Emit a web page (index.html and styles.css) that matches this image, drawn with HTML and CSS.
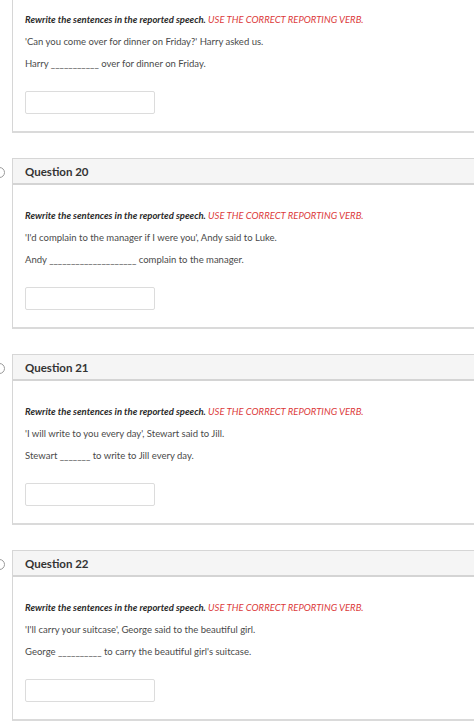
FILE: index.html
```html
<!DOCTYPE html>
<html lang="en">
<head>
<meta charset="utf-8">
<title>Quiz</title>
<link rel="stylesheet" href="styles.css">
</head>
<body>
<div class="page">
  <section class="card card-cut">
    <div class="body">
      <p class="instr"><span class="b">Rewrite the sentences in the reported speech.</span> <span class="red">USE THE CORRECT REPORTING VERB.</span></p>
      <p class="line">'Can you come over for dinner on Friday?' Harry asked us.</p>
      <p class="line">Harry ___________ over for dinner on Friday.</p>
      <div class="answer"></div>
    </div>
  </section>

  <section class="card">
    <div class="head"><span class="flag"></span>Question 20</div>
    <div class="body">
      <p class="instr"><span class="b">Rewrite the sentences in the reported speech.</span> <span class="red">USE THE CORRECT REPORTING VERB.</span></p>
      <p class="line">'I'd complain to the manager if I were you', Andy said to Luke.</p>
      <p class="line">Andy ____________________ complain to the manager.</p>
      <div class="answer"></div>
    </div>
  </section>

  <section class="card">
    <div class="head"><span class="flag"></span>Question 21</div>
    <div class="body">
      <p class="instr"><span class="b">Rewrite the sentences in the reported speech.</span> <span class="red">USE THE CORRECT REPORTING VERB.</span></p>
      <p class="line">'I will write to you every day', Stewart said to Jill.</p>
      <p class="line">Stewart _______ to write to Jill every day.</p>
      <div class="answer"></div>
    </div>
  </section>

  <section class="card">
    <div class="head"><span class="flag"></span>Question 22</div>
    <div class="body">
      <p class="instr"><span class="b">Rewrite the sentences in the reported speech.</span> <span class="red">USE THE CORRECT REPORTING VERB.</span></p>
      <p class="line">'I'll carry your suitcase', George said to the beautiful girl.</p>
      <p class="line">George __________ to carry the beautiful girl's suitcase.</p>
      <div class="answer"></div>
    </div>
  </section>
</div>
</body>
</html>
```

FILE: styles.css
```css
html, body {
  margin: 0;
  padding: 0;
  background: #fff;
  overflow: hidden;
}
body {
  font-family: Lato, "Open Sans", sans-serif;
  color: #444;
}
.page {
  padding-left: 12px;
  margin-right: -30px;
  display: flex;
  flex-direction: column;
  gap: 25px;
}
.card {
  border: 1px solid #d6d6d6;
  border-bottom: 2px solid #dadada;
  background: #fff;
}
.card-cut {
  border-top: none;
  margin-top: -11px;
}
.head {
  position: relative;
  height: 24px;
  background: #f5f5f5;
  border-bottom: 2px solid #d4d4d4;
  padding-left: 12px;
  font-size: 11.5px;
  font-weight: 700;
  color: #333;
  line-height: 25px;
}
.flag {
  position: absolute;
  left: -19px;
  top: 8px;
  width: 9px;
  height: 9px;
  border: 1px solid #9a9a9a;
  border-radius: 50%;
  background: #fff;
}
.body {
  padding: 24px 12px 17px 12px;
}
.instr, .line {
  margin: 0 0 8px 0;
  font-size: 9.5px;
  line-height: 14px;
}
.instr {
  font-style: italic;
}
.b {
  font-weight: 700;
  color: #2a2a2a;
}
.red {
  color: #dc3b3b;
}
.line {
  color: #4a4a4a;
}
.answer {
  margin-top: 20px;
  width: 128px;
  height: 21px;
  border: 1px solid #dcdcdc;
  border-radius: 2px;
  background: #fff;
}
```
